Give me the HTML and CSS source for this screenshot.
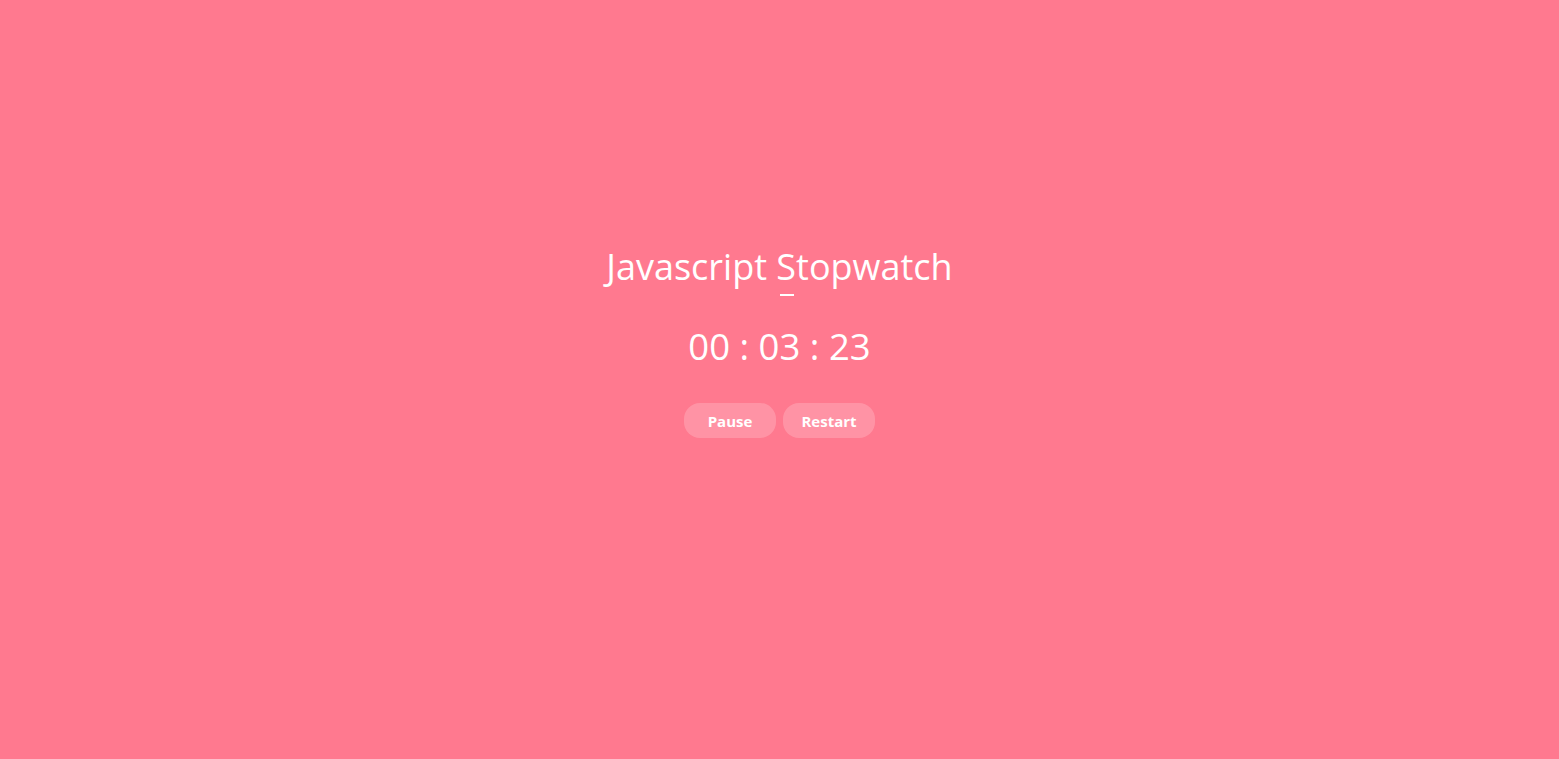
FILE: index.html
```html
<!DOCTYPE html>
<html>
<head>
<meta charset="utf-8">
<link rel="stylesheet" href="styles.css">
</head>
<body>
<main class="wrap">
  <h1 class="title">Javascript Stopwatch</h1>
  <div class="bar"></div>
  <div class="time">00 : 03 : 23</div>
  <div class="buttons">
    <button class="btn">Pause</button>
    <button class="btn">Restart</button>
  </div>
</main>
</body>
</html>
```
FILE: styles.css
```css
html, body {
  margin: 0;
  padding: 0;
  height: 100%;
}
body {
  background: #ff798f;
  font-family: "Open Sans", "Noto Sans", sans-serif;
  color: #fff;
}
.wrap {
  display: flex;
  flex-direction: column;
  align-items: center;
  padding-top: 244px;
}
.title {
  margin: 0;
  font-weight: 400;
  font-size: 36px;
  line-height: 46px;
}
.bar {
  width: 14px;
  height: 2px;
  background: #fff;
  margin-top: 4px;
  margin-left: 15px;
}
.time {
  margin-top: 26px;
  font-size: 36.5px;
  line-height: 48px;
}
.buttons {
  display: flex;
  gap: 7px;
  margin-top: 33px;
}
.btn {
  width: 92px;
  height: 35px;
  border: none;
  border-radius: 16px;
  background: rgba(255, 255, 255, 0.2);
  color: #fff;
  font-family: "Open Sans", "Noto Sans", sans-serif;
  font-weight: 700;
  font-size: 15px;
  padding: 0;
  cursor: pointer;
}
```
